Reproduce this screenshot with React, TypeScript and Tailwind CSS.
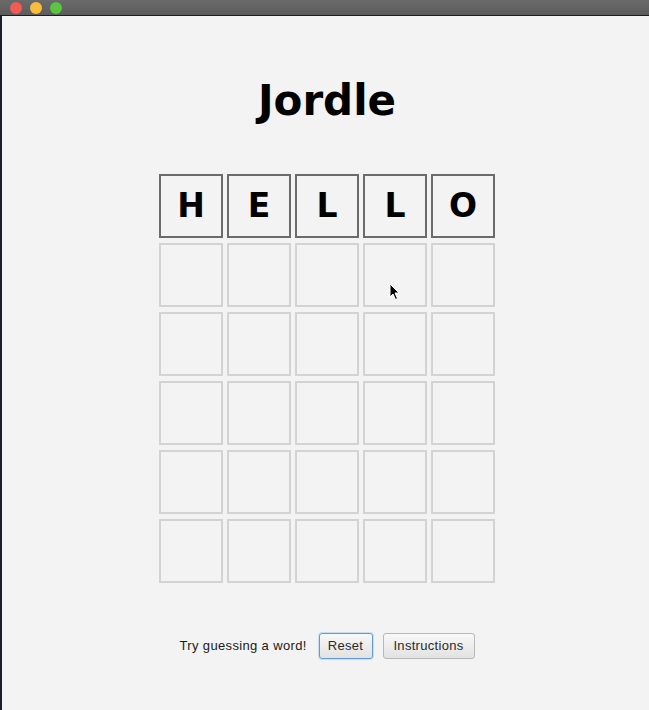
import React from "react";

const letters = ["H", "E", "L", "L", "O"];

export default function App() {
  const rows = [0, 1, 2, 3, 4, 5];
  return (
    <div className="w-[649px] h-[710px] bg-[#f3f3f3] flex flex-col overflow-hidden relative">
      <div className="h-[16px] shrink-0 bg-gradient-to-b from-[#6a6a6a] to-[#5c5c5c] border-b border-[#1e1e1e] flex items-center gap-[8px] pl-[10px]">
        <span className="w-[12px] h-[12px] rounded-full bg-[#f25a54]" />
        <span className="w-[12px] h-[12px] rounded-full bg-[#f8bd3a]" />
        <span className="w-[12px] h-[12px] rounded-full bg-[#5ac53f]" />
      </div>
      <div className="flex-1 flex border-l-2 border-[#1b1f27]">
        <div className="flex-1 flex flex-col items-center pl-[3px] pt-[61px]">
          <h1
            className="text-[42px] leading-[48px] font-bold text-black"
            style={{ fontFamily: '"DejaVu Sans", sans-serif' }}
          >
            Jordle
          </h1>
          <div className="mt-[49px] flex flex-col gap-[5px]">
            {rows.map((r) => (
              <div key={r} className="flex gap-[4px]">
                {[0, 1, 2, 3, 4].map((c) => (
                  <div
                    key={c}
                    className={
                      "w-[64px] h-[64px] border-2 flex items-center justify-center text-[33px] font-bold text-black " +
                      (r === 0 ? "border-[#6b6b6b]" : "border-[#d3d3d3]")
                    }
                    style={{ fontFamily: '"DejaVu Sans", sans-serif' }}
                  >
                    {r === 0 ? letters[c] : ""}
                  </div>
                ))}
              </div>
            ))}
          </div>
          <div
            className="mt-[50px] flex items-center text-[13px] text-[#1a1a1a]"
            style={{ fontFamily: '"Liberation Sans", Arial, sans-serif' }}
          >
            <span className="mr-[12px] tracking-[0.35px] w-[127px] whitespace-nowrap">Try guessing a word!</span>
            <button className="h-[26px] w-[54px] rounded-[3px] border border-[#5b9fd6] bg-gradient-to-b from-[#f8f8f8] to-[#e2e2e2] shadow-[0_0_0_1px_rgba(120,180,230,0.35)] text-[#2a2a2a] tracking-[0.3px] mr-[10px]">
              Reset
            </button>
            <button className="h-[26px] w-[92px] rounded-[3px] border border-[#b8b8b8] bg-gradient-to-b from-[#f8f8f8] to-[#e2e2e2] text-[#2a2a2a] tracking-[0.3px]">
              Instructions
            </button>
          </div>
        </div>
      </div>
      <svg
        className="absolute left-[389px] top-[283px]"
        width="12"
        height="18"
        viewBox="0 0 12 18"
      >
        <path d="M1 1 L1 14 L4 11 L6.5 16.5 L8.5 15.5 L6 10 L10 10 Z" fill="#000" stroke="#fff" strokeWidth="1" />
      </svg>
    </div>
  );
}
